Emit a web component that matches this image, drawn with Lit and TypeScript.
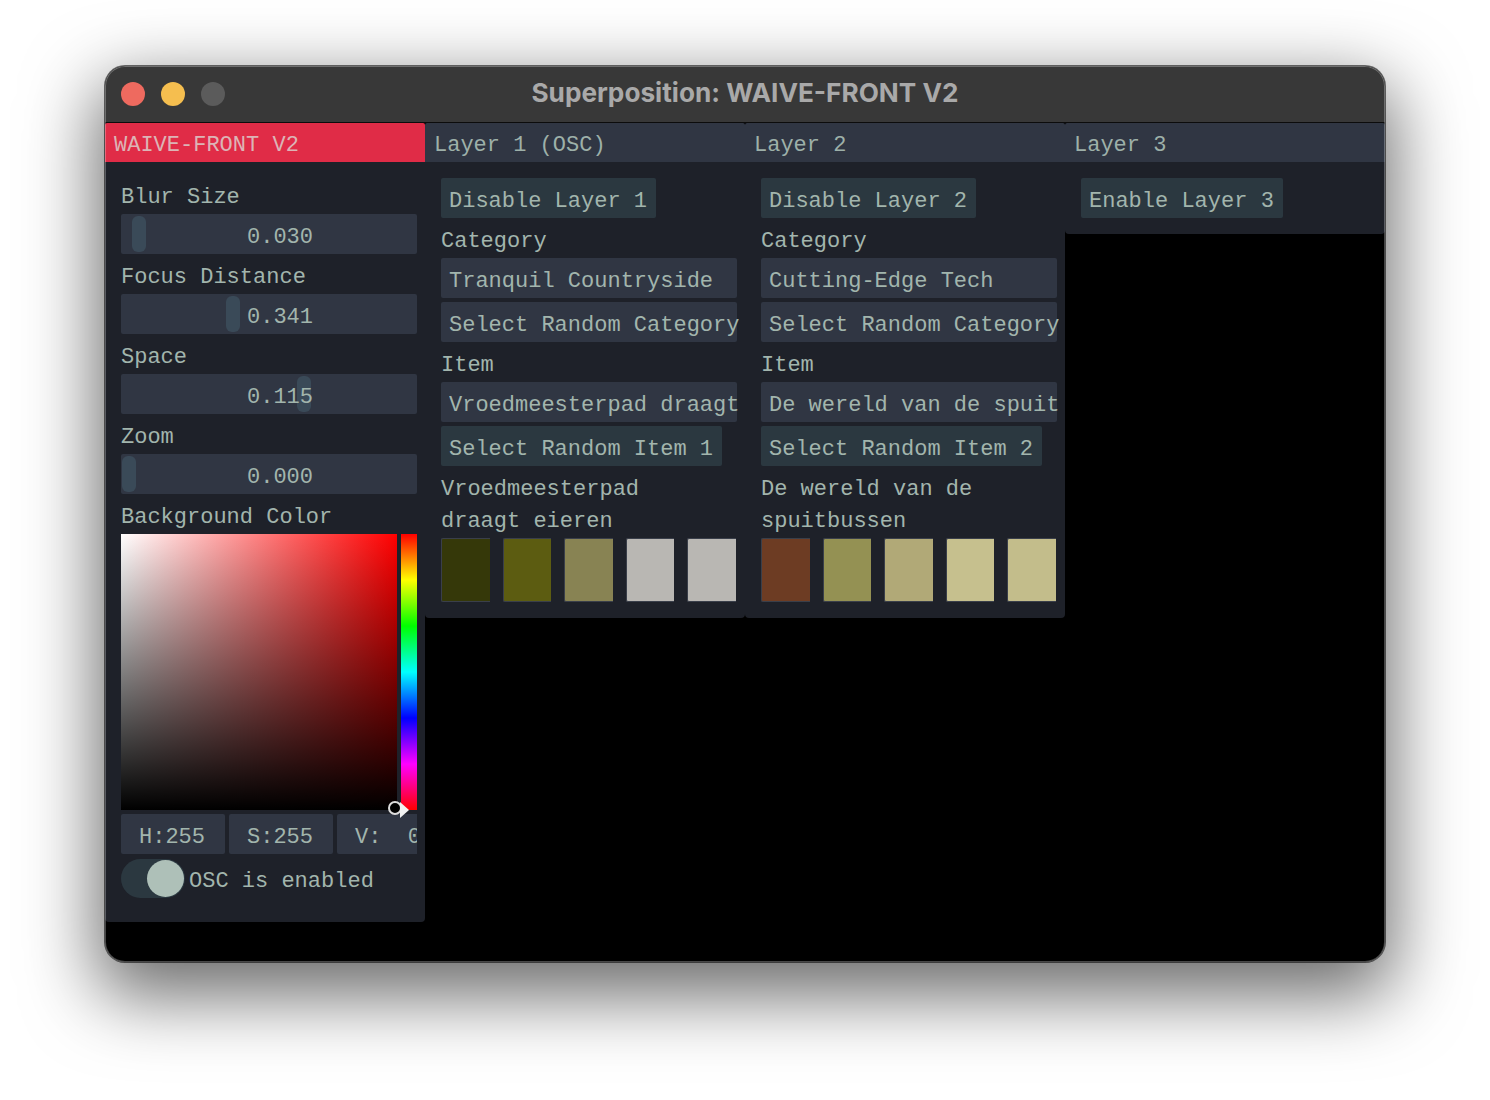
import { LitElement, html, css } from "lit";
import { customElement } from "lit/decorators.js";

const sliders = [
  ["Blur Size", "0.030", 11],
  ["Focus Distance", "0.341", 105],
  ["Space", "0.115", 176],
  ["Zoom", "0.000", 1],
] as const;

const layers = [
  {
    title: "Layer 1 (OSC)", toggle: "Disable Layer 1", cat: "Tranquil Countryside",
    item: "Vroedmeesterpad draagt eieren", rnd: "Select Random Item 1",
    name: ["Vroedmeesterpad", "draagt eieren"],
    colors: ["#353809", "#5c5c11", "#888353", "#b9b7b3", "#b9b7b3"],
  },
  {
    title: "Layer 2", toggle: "Disable Layer 2", cat: "Cutting-Edge Tech",
    item: "De wereld van de spuitbussen", rnd: "Select Random Item 2",
    name: ["De wereld van de", "spuitbussen"],
    colors: ["#6d3c23", "#949153", "#b1a977", "#c6c08e", "#c3bd8b"],
  },
];

@customElement("app-root")
export class AppRoot extends LitElement {
  static styles = css`
    :host { display: block; width: 1490px; height: 1100px; background: #fff; font-family: "Liberation Mono", monospace; font-size: 22px; color: #a2b5ad; overflow: hidden; }
    .page { padding: 66px 105px; }
    .window { width: 1280px; height: 896px; border-radius: 20px; background: #000; overflow: hidden; display: flex; flex-direction: column; position: relative; }
    .window::after { content: ""; position: absolute; inset: 0; border-radius: 20px; box-shadow: inset 0 0 0 1px rgba(255,255,255,.28); pointer-events: none; }
    .shadow { border-radius: 20px; box-shadow: 0 26px 72px 8px rgba(0,0,0,.58), 0 0 0 1px rgba(0,0,0,.55); }
    .bar { height: 57px; flex: none; background: #383838; border-bottom: 1px solid #0c0c0c; box-sizing: border-box; display: flex; align-items: center; padding: 0 16px; gap: 16px; position: relative; }
    .dot { width: 24px; height: 24px; border-radius: 50%; }
    .title { position: absolute; left: 0; right: 0; text-align: center; font: 700 26.2px Inter, "Liberation Sans", sans-serif; color: #a9a9a9; top: 11px; }
    .cols { display: flex; align-items: flex-start; flex: 1; }
    .col { width: 320px; flex: none; }
    .head { height: 39px; line-height: 46px; padding-left: 9px; background: #303643; white-space: pre; color: #9db0a9; border-radius: 2px 2px 0 0; overflow: hidden; }
    .head.red { background: #e02c47; color: #dcb4b6; }
    .panel { background: #1e2129; padding: 16px 8px 16px 16px; display: flex; flex-direction: column; gap: 4px; border-radius: 0 0 4px 4px; }
    .panel.tall { padding-bottom: 24px; }
    .label { line-height: 40px; height: 32px; white-space: pre; }
    .btn { height: 40px; line-height: 32px; padding: 8px 8px 0; border-radius: 2px; white-space: pre; box-sizing: border-box; }
    .btn.toggle { background: #2b3840; align-self: flex-start; padding-right: 9px; }
    .btn.combo { background: #303643; width: 296px; }
    .clip { display: block; width: 290px; overflow: hidden; }
    .slider { height: 40px; width: 296px; background: #303643; border-radius: 2px; position: relative; line-height: 48px; padding-left: 126px; box-sizing: border-box; }
    .grab { position: absolute; top: 2px; width: 14px; height: 36px; border-radius: 6px; background: #3a4a58; }
    .val { position: relative; }
    .picker { display: flex; gap: 4px; height: 276px; position: relative; }
    .sv { width: 276px; height: 276px; background: linear-gradient(to top, #000, transparent), linear-gradient(to right, #fff, #f00); }
    .hue { width: 16px; height: 276px; background: linear-gradient(to bottom, #f00, #ff0 16.67%, #0f0 33.33%, #0ff 50%, #00f 66.67%, #f0f 83.33%, #f00); }
    .ring { position: absolute; left: 267px; top: 267px; border-radius: 50%; background: #000; border: 2px solid #ddd; box-sizing: border-box; width: 14px; height: 14px; }
    .tri { position: absolute; left: 279px; top: 268px; }
    .hsv { display: flex; gap: 4px; width: 296px; overflow: hidden; }
    .hsv div { flex: none; width: 104px; height: 40px; line-height: 48px; text-align: center; text-indent: -2px; background: #303643; border-radius: 2px; white-space: pre; }
    .osc { display: flex; align-items: center; gap: 4px; height: 40px; white-space: pre; }
    .sw { width: 64px; height: 39px; border-radius: 20px; background: #2b3840; position: relative; flex: none; }
    .knob { position: absolute; left: 26px; top: 1px; width: 37px; height: 37px; border-radius: 50%; background: #aec0b8; }
    .osc span { margin-top: 6px; }
    .swatches { display: flex; gap: 13px; width: 295px; }
    .swatch { flex: 1; height: 64px; border: 1px solid #3a3f4a; border-right: 0; box-sizing: border-box; border-radius: 2px 0 0 2px; }
  `;

  render() {
    return html`<div class="page"><div class="shadow"><div class="window">
      <div class="bar">
        <div class="dot" style="background:#ee6a5f"></div>
        <div class="dot" style="background:#f5be4f"></div>
        <div class="dot" style="background:#5b5b5b"></div>
        <div class="title">Superposition: WAIVE-FRONT V2</div>
      </div>
      <div class="cols">
        <div class="col">
          <div class="head red">WAIVE-FRONT V2</div>
          <div class="panel tall">
            ${sliders.map(([l, v, x]) => html`
              <div class="label">${l}</div>
              <div class="slider"><div class="grab" style="left:${x}px"></div><span class="val">${v}</span></div>`)}
            <div class="label">Background Color</div>
            <div class="picker">
              <div class="sv"></div><div class="hue"></div>
              <div class="ring"></div>
              <svg class="tri" width="10" height="16" viewBox="0 0 10 16"><path d="M0 0 L9 8 L0 16 Z" fill="#f2f2f2"/></svg>
            </div>
            <div class="hsv"><div>H:255</div><div>S:255</div><div>V:  0</div></div>
            <div class="osc"><div class="sw"><div class="knob"></div></div><span>OSC is enabled</span></div>
          </div>
        </div>
        ${layers.map((y) => html`
          <div class="col">
            <div class="head">${y.title}</div>
            <div class="panel">
              <div class="btn toggle">${y.toggle}</div>
              <div class="label">Category</div>
              <div class="btn combo"><span class="clip">${y.cat}</span></div>
              <div class="btn combo"><span class="clip">Select Random Category</span></div>
              <div class="label">Item</div>
              <div class="btn combo"><span class="clip">${y.item}</span></div>
              <div class="btn toggle">${y.rnd}</div>
              <div class="label">${y.name[0]}</div>
              <div class="label" style="margin-top:-4px">${y.name[1]}</div>
              <div class="swatches">${y.colors.map((c) => html`<div class="swatch" style="background:${c}"></div>`)}</div>
            </div>
          </div>`)}
        <div class="col">
          <div class="head">Layer 3</div>
          <div class="panel"><div class="btn toggle">Enable Layer 3</div></div>
        </div>
      </div>
    </div></div></div>`;
  }
}
